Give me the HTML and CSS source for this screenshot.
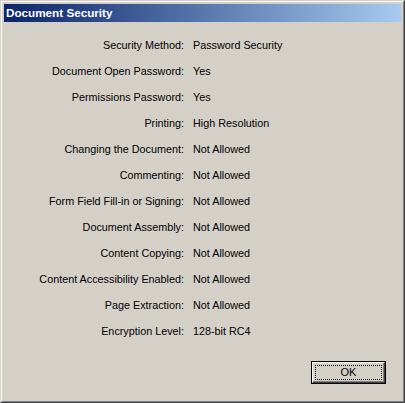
FILE: index.html
```html
<!DOCTYPE html>
<html>
<head>
<meta charset="utf-8">
<link rel="stylesheet" href="styles.css">
</head>
<body>
<div class="window">
  <div class="frame">
    <div class="titlebar">Document Security</div>
    <div class="content">
      <div class="grid">
        <div class="label">Security Method:</div><div class="value">Password Security</div>
        <div class="label">Document Open Password:</div><div class="value">Yes</div>
        <div class="label">Permissions Password:</div><div class="value">Yes</div>
        <div class="label">Printing:</div><div class="value">High Resolution</div>
        <div class="label">Changing the Document:</div><div class="value">Not Allowed</div>
        <div class="label">Commenting:</div><div class="value">Not Allowed</div>
        <div class="label">Form Field Fill-in or Signing:</div><div class="value">Not Allowed</div>
        <div class="label">Document Assembly:</div><div class="value">Not Allowed</div>
        <div class="label">Content Copying:</div><div class="value">Not Allowed</div>
        <div class="label">Content Accessibility Enabled:</div><div class="value">Not Allowed</div>
        <div class="label">Page Extraction:</div><div class="value">Not Allowed</div>
        <div class="label">Encryption Level:</div><div class="value">128-bit RC4</div>
      </div>
      <div class="footer">
        <button class="btn"><span class="btn-inner"><span class="focus">OK</span></span></button>
      </div>
    </div>
  </div>
</div>
</body>
</html>
```
FILE: styles.css
```css
html, body {
  margin: 0;
  padding: 0;
  background: #d4d0c8;
}
.window {
  width: 405px;
  height: 403px;
  box-sizing: border-box;
  border: 1px solid;
  border-color: #d4d0c8 #404040 #404040 #d4d0c8;
  background: #d4d0c8;
  font-family: "Liberation Sans", Arial, sans-serif;
  font-size: 10.8px;
  color: #000;
}
.frame {
  height: 100%;
  box-sizing: border-box;
  border: 1px solid;
  border-color: #ffffff #808080 #808080 #ffffff;
  padding: 2px;
  display: flex;
  flex-direction: column;
}
.titlebar {
  height: 18px;
  line-height: 18px;
  padding-left: 2px;
  background: linear-gradient(to right, #0a246a, #a6caf0);
  color: #fff;
  font-weight: bold;
  font-size: 11.7px;
}
.content {
  flex: 1;
  display: flex;
  flex-direction: column;
}
.grid {
  display: grid;
  grid-template-columns: 180px 1fr;
  column-gap: 9px;
  grid-auto-rows: 26px;
  padding-top: 10px;
}
.label, .value {
  line-height: 26px;
  white-space: nowrap;
}
.label {
  text-align: right;
}
.footer {
  display: flex;
  justify-content: flex-end;
  padding-top: 17px;
  padding-right: 15px;
}
.btn {
  width: 75px;
  height: 23px;
  padding: 0;
  margin: 0;
  border: 1px solid #000;
  background: #d4d0c8;
  font: inherit;
  display: flex;
  box-sizing: border-box;
}
.btn-inner {
  flex: 1;
  display: flex;
  border: 1px solid;
  border-color: #ffffff #404040 #404040 #ffffff;
  box-shadow: inset -1px -1px 0 #808080;
  padding: 2px;
}
.focus {
  flex: 1;
  border: 1px dotted #000;
  display: flex;
  align-items: center;
  justify-content: center;
  line-height: 1;
  font-size: 11px;
}
```
